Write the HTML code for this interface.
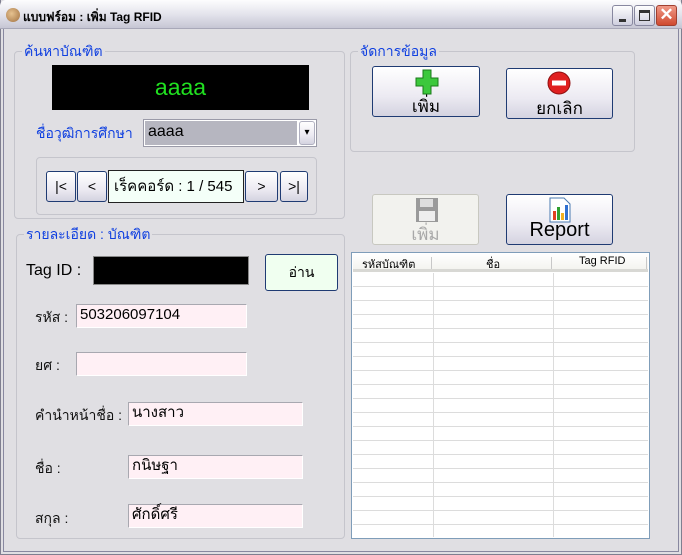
<!DOCTYPE html>
<html><head><meta charset="utf-8"><style>
*{box-sizing:border-box;margin:0;padding:0}
body{width:682px;height:555px;background:#e0dfe3;font-family:"Liberation Sans","Noto Sans CJK SC",sans-serif;position:relative;overflow:hidden;font-size:14px}
.a{position:absolute}
.win{left:0;top:0;width:682px;height:555px;border:1px solid #7f7f90;border-top:none;background:#e0dfe3}
.tb{left:0;top:0;width:682px;height:29px;background:linear-gradient(#fdfdfe,#e4e4ec 50%,#c6c6d4);border-bottom:1px solid #a8a8b8;border-radius:6px 6px 0 0}
.inner{left:3px;top:29px;width:676px;height:523px;border:1px solid #8888a0;border-top:none}
.grp{border:1px solid #c5c5cc;border-radius:4px}
.lg{background:#e0dfe3;color:#1040e0;font-size:14px;padding:0 2px;line-height:16px}
.btn{border:1px solid #1f3b73;border-radius:3px;background:linear-gradient(#ffffff,#eceaf2 60%,#d4d3e0);text-align:center;font-size:14px;color:#000}
.inp{background:#fff0f5;border:1px solid #a8a8b0;border-right-color:#fff;border-bottom-color:#fff;font-size:15px;padding-left:3px;line-height:20px}
.lbl{font-size:14px;color:#111}
.wb{width:21px;height:21px;border:1px solid #8888a0;border-radius:3px;background:linear-gradient(#fefefe,#cfcfdf)}
</style></head><body>
<div class="a win"></div>
<div class="a tb"></div>
<div class="a" style="left:6px;top:8px;width:14px;height:14px;border-radius:50%;background:radial-gradient(circle at 40% 40%,#e6c290,#a07040)"></div>
<div class="a" style="left:23px;top:8px;font-size:12px;font-weight:bold;color:#000">แบบฟร์อม : เพิ่ม Tag RFID</div>
<div class="a wb" style="left:612px;top:5px"><div class="a" style="left:6px;top:13px;width:7px;height:3px;background:#333"></div></div>
<div class="a wb" style="left:634px;top:5px"><div class="a" style="left:4px;top:4px;width:11px;height:11px;border:1px solid #333;border-top-width:3px"></div></div>
<div class="a wb" style="left:656px;top:5px;background:linear-gradient(#f09a88,#d04a30);border-color:#a04030;color:#fff;font-size:17px;line-height:18px;text-align:center;font-weight:bold">✕</div>
<div class="a inner"></div>

<!-- group 1 -->
<div class="a grp" style="left:14px;top:51px;width:331px;height:168px"></div>
<div class="a lg" style="left:22px;top:43px">ค้นหาบัณฑิต</div>
<div class="a" style="left:52px;top:65px;width:257px;height:45px;background:#000;color:#20e020;font-size:23px;text-align:center;line-height:45px">aaaa</div>
<div class="a lg" style="left:34px;top:125px">ชื่อวุฒิการศึกษา</div>
<div class="a" style="left:143px;top:119px;width:174px;height:28px;border:1px solid #9a9aa8;background:#fff"></div>
<div class="a" style="left:145px;top:121px;width:152px;height:24px;background:#b6b6c0;font-size:16px;line-height:22px;padding-left:3px">aaaa</div>
<div class="a btn" style="left:299px;top:121px;width:16px;height:24px;border-color:#b0b0c0;font-size:10px;line-height:22px">▾</div>
<div class="a grp" style="left:36px;top:157px;width:281px;height:58px"></div>
<div class="a btn" style="left:46px;top:171px;width:30px;height:31px;line-height:29px">|&lt;</div>
<div class="a btn" style="left:77px;top:171px;width:30px;height:31px;line-height:29px">&lt;</div>
<div class="a" style="left:108px;top:170px;width:136px;height:33px;background:#f4fff8;border:1px solid #222;font-size:15px;line-height:31px;padding-left:5px">เร็คคอร์ด : 1 / 545</div>
<div class="a btn" style="left:245px;top:171px;width:33px;height:31px;line-height:29px">&gt;</div>
<div class="a btn" style="left:280px;top:171px;width:28px;height:31px;line-height:29px">&gt;|</div>

<!-- group 2 -->
<div class="a grp" style="left:16px;top:234px;width:329px;height:305px"></div>
<div class="a lg" style="left:24px;top:226px">รายละเอียด : บัณฑิต</div>
<div class="a" style="left:26px;top:262px;font-size:16px">Tag ID :</div>
<div class="a" style="left:93px;top:256px;width:156px;height:29px;background:#000;border:1px solid #888"></div>
<div class="a btn" style="left:265px;top:254px;width:73px;height:37px;line-height:35px;background:#f0fff0;border-color:#1f3b73">อ่าน</div>
<div class="a lbl" style="left:35px;top:307px">รหัส :</div>
<div class="a inp" style="left:76px;top:304px;width:171px;height:24px">503206097104</div>
<div class="a lbl" style="left:35px;top:355px">ยศ :</div>
<div class="a inp" style="left:76px;top:352px;width:171px;height:24px"></div>
<div class="a lbl" style="left:35px;top:405px">คำนำหน้าชื่อ :</div>
<div class="a inp" style="left:128px;top:402px;width:175px;height:24px">นางสาว</div>
<div class="a lbl" style="left:35px;top:458px">ชื่อ :</div>
<div class="a inp" style="left:128px;top:455px;width:175px;height:24px">กนิษฐา</div>
<div class="a lbl" style="left:35px;top:508px">สกุล :</div>
<div class="a inp" style="left:128px;top:504px;width:175px;height:24px">ศักดิ์ศรี</div>

<!-- group 3 -->
<div class="a grp" style="left:350px;top:51px;width:285px;height:101px"></div>
<div class="a lg" style="left:358px;top:43px">จัดการข้อมูล</div>
<div class="a btn" style="left:372px;top:66px;width:108px;height:51px">
 <svg class="a" style="left:42px;top:2px" width="24" height="26" viewBox="0 0 24 26"><path d="M8 1h8v8h7v8h-7v8H8v-8H1V9h7z" fill="#3cc83c" stroke="#1a7a1a"/></svg>
 <div class="a" style="left:0;top:26px;width:106px;font-size:17px">เพิ่ม</div></div>
<div class="a btn" style="left:506px;top:68px;width:107px;height:51px">
 <svg class="a" style="left:40px;top:2px" width="24" height="24" viewBox="0 0 24 24"><circle cx="12" cy="12" r="11" fill="#e02020" stroke="#901010"/><rect x="5" y="9.5" width="14" height="5" fill="#fff"/></svg>
 <div class="a" style="left:0;top:26px;width:105px;font-size:17px">ยกเลิก</div></div>

<div class="a" style="left:372px;top:194px;width:107px;height:51px;border:1px solid #c8c8c0;border-radius:3px;background:#f2f2ee;text-align:center">
 <svg class="a" style="left:42px;top:2px" width="24" height="26" viewBox="0 0 24 26"><rect x="1" y="1" width="22" height="24" fill="#9a9a9a"/><rect x="5" y="2" width="13" height="8" fill="#ddd"/><rect x="4" y="14" width="16" height="10" fill="#eee"/></svg>
 <div class="a" style="left:0;top:26px;width:105px;font-size:17px;color:#a8a8a8">เพิ่ม</div></div>
<div class="a btn" style="left:506px;top:194px;width:107px;height:51px">
 <svg class="a" style="left:42px;top:2px" width="22" height="26" viewBox="0 0 22 26"><path d="M1 1h14l6 6v18H1z" fill="#fff" stroke="#4a7ab0"/><rect x="4" y="14" width="3" height="9" fill="#e04020"/><rect x="8" y="10" width="3" height="13" fill="#30a030"/><rect x="12" y="16" width="3" height="7" fill="#f0b020"/><rect x="16" y="8" width="3" height="15" fill="#3070d0"/></svg>
 <div class="a" style="left:0;top:24px;width:105px;font-size:20px">Report</div></div>

<!-- grid -->
<div class="a" style="left:351px;top:252px;width:299px;height:287px;border:1px solid #7f9db9;background:#fff"></div>
<div class="a" style="left:353px;top:254px;width:295px;height:18px;background:linear-gradient(#fff,#f4f4f0);border-bottom:3px solid #d8d8d4;font-size:11px"></div>
<div class="a" style="left:362px;top:255px;font-size:11px">รหัสบัณฑิต</div>
<div class="a" style="left:486px;top:255px;font-size:11px">ชื่อ</div>
<div class="a" style="left:579px;top:255px;font-size:11px">Tag RFID</div>
<div class="a" style="left:431px;top:257px;width:1px;height:12px;background:#c8c8c8"></div>
<div class="a" style="left:551px;top:257px;width:1px;height:12px;background:#c8c8c8"></div>
<div class="a" style="left:646px;top:257px;width:1px;height:12px;background:#c8c8c8"></div>
<div class="a" style="left:353px;top:273px;width:295px;height:264px;background:repeating-linear-gradient(#fff 0,#fff 13px,#dcdcdc 13px,#dcdcdc 14px)"></div>
<div class="a" style="left:433px;top:273px;width:1px;height:264px;background:#dcdcdc"></div>
<div class="a" style="left:553px;top:273px;width:1px;height:264px;background:#dcdcdc"></div>
</body></html>
